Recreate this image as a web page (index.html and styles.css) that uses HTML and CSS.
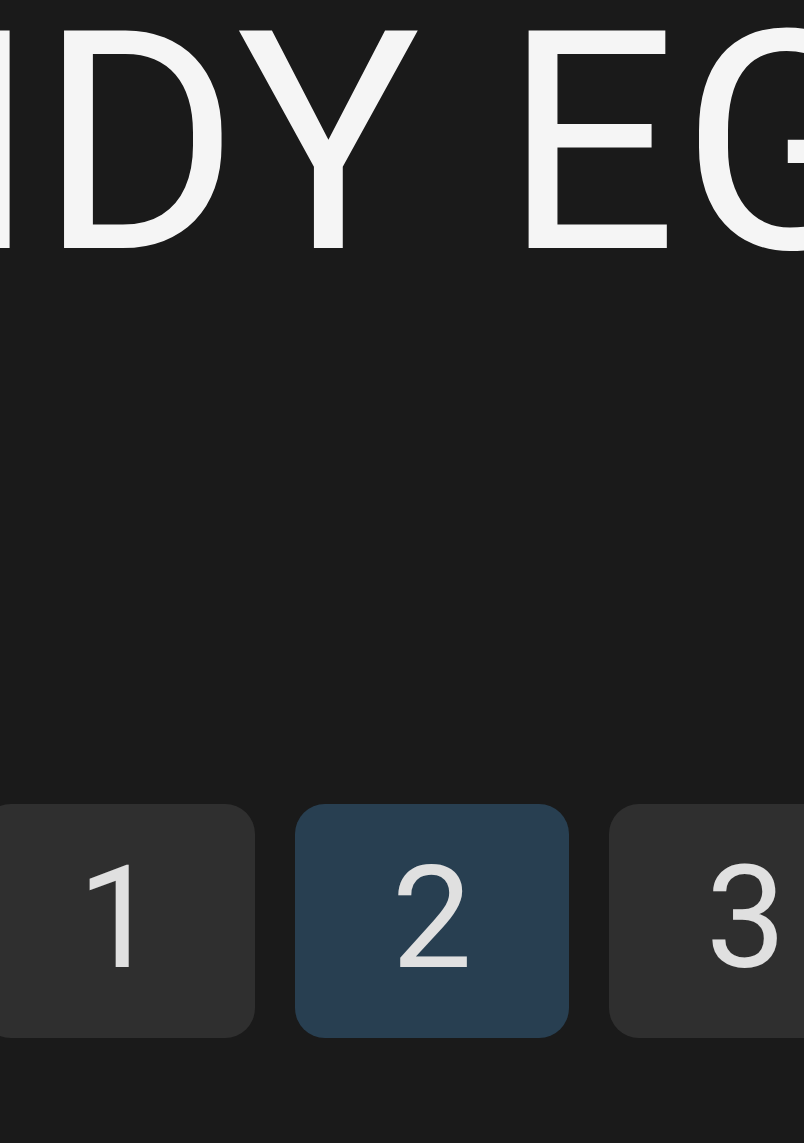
FILE: index.html
```html
<!DOCTYPE html>
<html lang="en">
<head>
<meta charset="utf-8">
<title>Candy Egg</title>
<link rel="stylesheet" href="styles.css">
</head>
<body>
<div class="page">
  <h1 class="title">NDY EGG</h1>
  <div class="pager">
    <button class="page-btn">1</button>
    <button class="page-btn active">2</button>
    <button class="page-btn">3</button>
  </div>
</div>
</body>
</html>
```
FILE: styles.css
```css
html, body {
  margin: 0;
  padding: 0;
  background: #1a1a1a;
  overflow: hidden;
  height: 100%;
}
.page {
  width: 804px;
  height: 1143px;
  overflow: hidden;
  font-family: Roboto, "Liberation Sans", sans-serif;
}
.title {
  margin: -9px 0 0 -183px;
  font-size: 306px;
  font-weight: 400;
  line-height: 1;
  letter-spacing: 3.5px;
  color: #f5f5f5;
  white-space: nowrap;
  height: 304px;
}
.pager {
  display: flex;
  gap: 40px;
  margin: 509px 0 0 -19px;
}
.page-btn {
  flex: 0 0 274px;
  height: 234px;
  border: none;
  border-radius: 30px;
  background: #2f2f2f;
  color: #e0e0e0;
  font-family: Roboto, "Liberation Sans", sans-serif;
  font-size: 143px;
  line-height: 1;
  padding: 0 0 6px;
  display: flex;
  align-items: center;
  justify-content: center;
}
.page-btn.active {
  background: #283f51;
}
```
